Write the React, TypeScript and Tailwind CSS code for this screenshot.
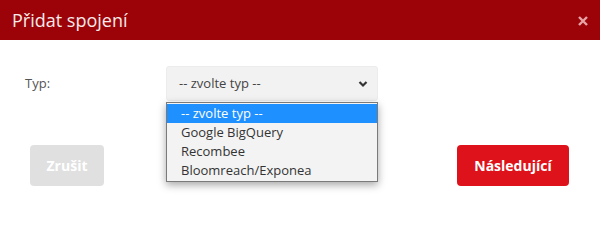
import React from "react";

export default function App() {
  const font = { fontFamily: '"Open Sans", "Liberation Sans", sans-serif' };
  return (
    <div className="w-[600px] h-[241px] bg-white overflow-hidden relative" style={font}>
      <div className="h-[40px] bg-[#9b0309] flex items-center justify-between pl-[12px] pr-[12px]">
        <span className="text-[18px] text-[#f7eaea] leading-none">Přidat spojení</span>
        <svg width="10" height="10" viewBox="0 0 10 10" className="mt-[1px]">
          <path d="M1 1 L9 9 M9 1 L1 9" stroke="#e8a3a6" strokeWidth="2.4" />
        </svg>
      </div>
      <div className="pl-[25px] pt-[26px] flex items-start">
        <div className="w-[141px] h-[35px] flex items-center text-[13px] text-[#555]">Typ:</div>
        <div className="relative">
          <div className="w-[212px] h-[35px] bg-[#f2f2f2] rounded-[3px] border border-[#ececec] flex items-center justify-between pl-[12px] pr-[9px] text-[13px] text-[#444]">
            <span>-- zvolte typ --</span>
            <svg width="10" height="8" viewBox="0 0 10 8">
              <path d="M1.5 2 L5 5.5 L8.5 2" stroke="#333" strokeWidth="2.2" fill="none" />
            </svg>
          </div>
          <div className="absolute left-0 top-[36px] w-[212px] border border-[#7a7a7a] bg-[#f3f3f3] shadow-[0_3px_8px_rgba(0,0,0,0.35)] text-[13px] text-[#333] py-px">
            <div className="h-[19px] leading-[19px] pl-[14px] bg-[#1e90ff] text-white">-- zvolte typ --</div>
            <div className="h-[19px] leading-[19px] pl-[14px]">Google BigQuery</div>
            <div className="h-[19px] leading-[19px] pl-[14px]">Recombee</div>
            <div className="h-[19px] leading-[19px] pl-[14px]">Bloomreach/Exponea</div>
          </div>
        </div>
      </div>
      <div className="flex justify-between pl-[30px] pr-[31px] mt-[44px]">
        <div className="w-[74px] h-[41px] bg-[#e0e0e0] rounded-[4px] flex items-center justify-center text-[14px] font-bold text-white">Zrušit</div>
        <div className="w-[112px] h-[41px] bg-[#de121a] rounded-[4px] flex items-center justify-center text-[14px] font-bold text-white">Následující</div>
      </div>
    </div>
  );
}
